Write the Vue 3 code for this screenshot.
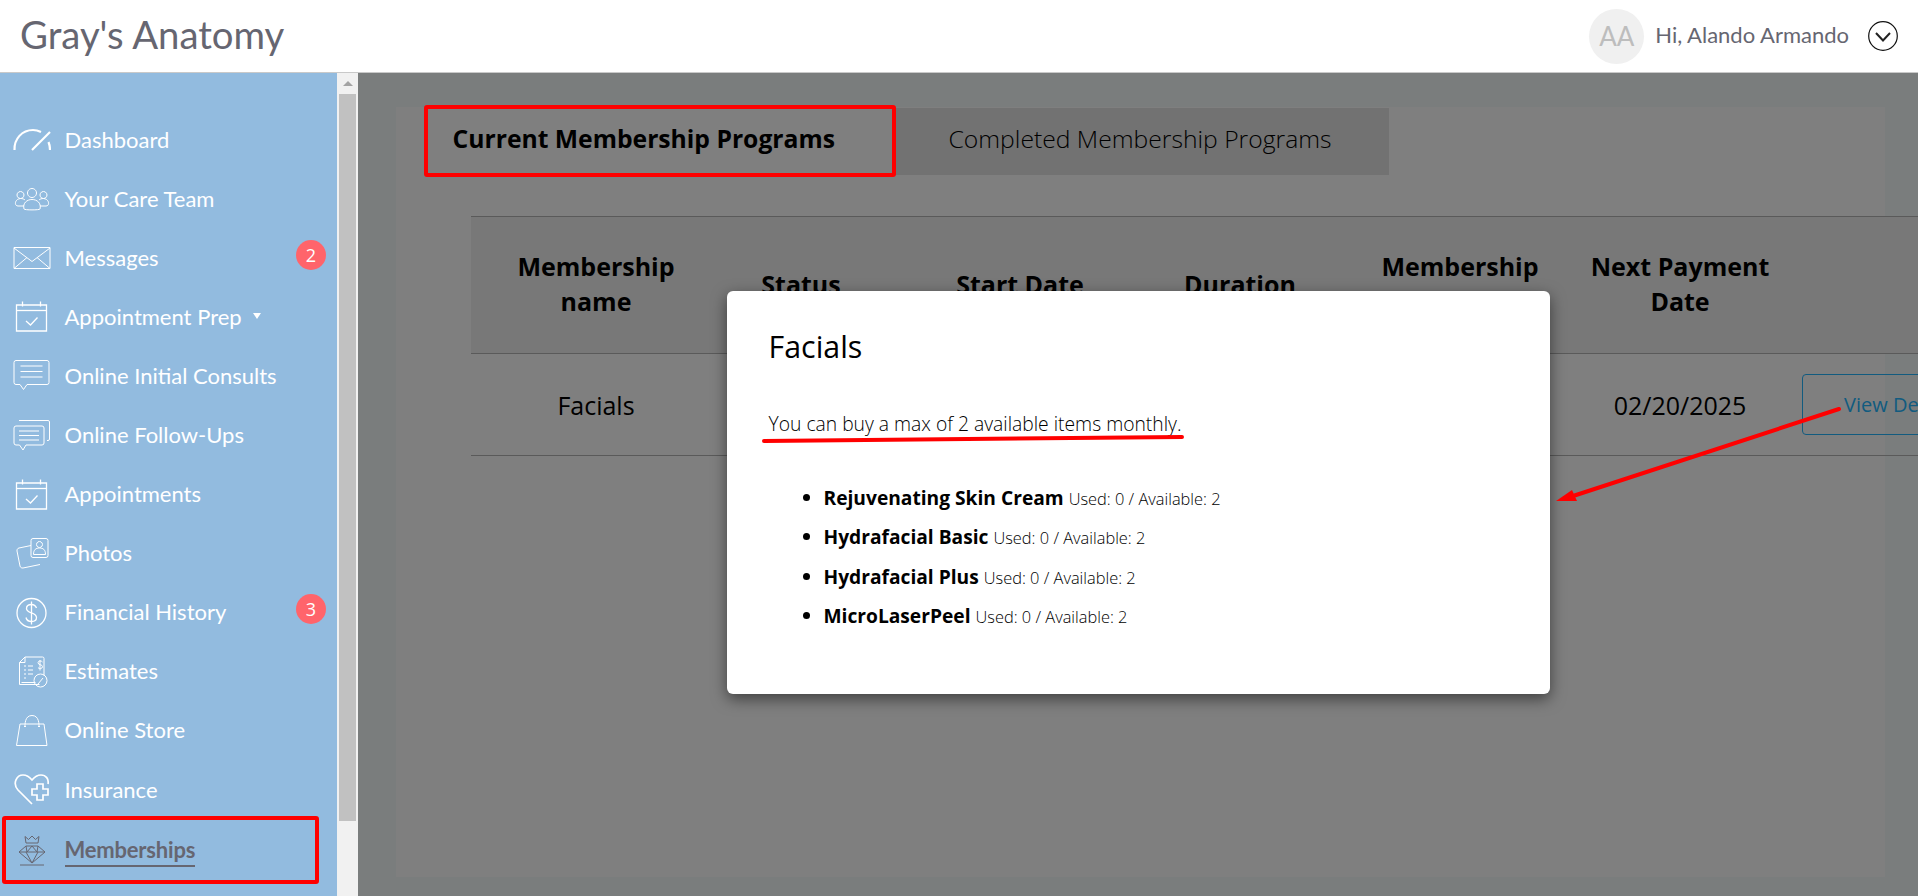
<script setup>
const nav = [
  { label: 'Dashboard', paths: ['M1.500 29C1 18 9 9 20 9c3 0 6 1 8 2', 'M19 29L37 11', 'M35.500 21c1 2.500 1.500 5 1.500 8'], sw: 2.200 },
  { label: 'Your Care Team', sw: 1, paths: ['M19 8.500a4.500 4.500 0 1 1-.01 0z', 'M7.500 11.500a3.500 3.500 0 1 1-.01 0z', 'M30.500 11.500a3.500 3.500 0 1 1-.01 0z', 'M11 29c-1.500-6 3-9.500 8-9.500s9.500 3.500 8 9.500c-.4 1.200-15.600 1.200-16 0z', 'M11 26H5c-4 0-3.500-7 2.500-7.500 2 0 3.500.5 4.500 1.500', 'M27 26h6c4 0 3.500-7-2.500-7.500-2 0-3.500.5-4.500 1.500'] },
  { label: 'Messages', badge: 2, sw: 1, paths: ['M1 8.500h36v21H1z', 'M1 9l18 13.500L37 9', 'M1 29.500l13-11', 'M37 29.500l-13-11'] },
  { label: 'Appointment Prep', caret: true, paths: ['M3.500 7h30v26h-30z', 'M3.500 12.500h30', 'M9.500 3.500v5', 'M27.500 3.500v5', 'M13 23l4.500 4 7-7.500'] },
  { label: 'Online Initial Consults', sw: 1, paths: ['M3 3.500h31a2 2 0 0 1 2 2v20a2 2 0 0 1-2 2H14l-3.500 5-3.500-5H3a2 2 0 0 1-2-2v-20a2 2 0 0 1 2-2z', 'M7.500 9h22', 'M7.500 14.500h22', 'M7.500 20h22'] },
  { label: 'Online Follow-Ups', sw: 1, paths: ['M3 9h26a2 2 0 0 1 2 2v15a2 2 0 0 1-2 2H13l-3 5-3.500-5H3a2 2 0 0 1-2-2V11a2 2 0 0 1 2-2z', 'M6 3.500h29a1.500 1.500 0 0 1 1.500 1.500v17a1.500 1.500 0 0 1-1.500 1.500h-1', 'M6 14h20', 'M6 18.500h20', 'M6 23h20'] },
  { label: 'Appointments', paths: ['M3.500 7h30v26h-30z', 'M3.500 12.500h30', 'M9.500 3.500v5', 'M27.500 3.500v5', 'M13 23l4.500 4 7-7.500'] },
  { label: 'Photos', sw: 1, paths: ['M20 3.500h13a2 2 0 0 1 2 2v15a2 2 0 0 1-2 2H20a2 2 0 0 1-2-2v-15a2 2 0 0 1 2-2z', 'M26.500 6.500a3 3 0 1 1-.01 0z', 'M20.500 19.500c0-5 2.500-6.500 6-6.500s6 1.500 6 6.500z', 'M18 10.500L6 13c-1.500.3-2.200 1.500-2 3l3 15c.3 1.500 1.500 2.200 3 2l17-3.500'] },
  { label: 'Financial History', badge: 3, paths: ['M33 19a14.500 14.500 0 1 1-29 0 14.500 14.500 0 1 1 29 0z', 'M23.500 14c-1-2.500-3-3.500-5-3.500-3 0-5 1.700-5 4 0 5.500 10 3 10 9 0 2.500-2.300 4-5 4s-5-1.500-5.500-4', 'M18.500 7.500v23'] },
  { label: 'Estimates', sw: 1, paths: ['M12 4h17.500a1.500 1.500 0 0 1 1.500 1.500v17', 'M12 4L6.500 9.500v22h20', 'M12 4v5.500H6.500', 'M11 13h2', 'M11 17h2', 'M11 21h2', 'M11 25h2', 'M15 13h5', 'M15 17h5', 'M15 21h5', 'M8.500 29.500h14', 'M29.500 9c-1-1.500-4.500-1.500-4.500.7 0 2.800 4.500 1.300 4.500 4 0 2.300-3.500 2.300-4.500 1', 'M27 7v10.500', 'M34 27.500a6.500 6.500 0 1 1-13 0 6.500 6.500 0 1 1 13 0z', 'M25 31l5-6'] },
  { label: 'Online Store', sw: 1, paths: ['M7 12h24l3 21.500H3.500z', 'M12 15c0-2-.5-11.500 7-11.500s7 9.500 7 11.500', 'M11 14.500h2', 'M25 14.500h2'] },
  { label: 'Insurance', sw: 1.700, paths: ['M19 33L5 19C-1 12 4 4 10 4c4 0 7 2.500 9 5 2-2.500 5-5 9-5 5 0 8 4 7 9', 'M24 18v-5h6v5h5v6h-5v5h-6v-5h-5v-6z'] },
  { label: 'Memberships', active: true, sw: 1, paths: ['M13 13L12 6.500l3.500 3L19 6l3.500 3.500L26 6.500 25 13z', 'M13 16h12l7 6-13 11L6 22z', 'M6 22h26', 'M13 22l6 11 6-11', 'M13 16l1 6 5-6 5 6 1-6', 'M7 35h24'] },
]
</script>

<template>
  <div class="page">
    <header class="top">
      <div class="brand">Gray's Anatomy</div>
      <div class="user">
        <div class="avatar">AA</div>
        <span class="hi">Hi, Alando Armando</span>
        <svg class="chev" width="30" height="30" viewBox="0 0 30 30">
          <circle cx="15" cy="15" r="14.300" fill="none" stroke="#111" stroke-width="1.200" />
          <path d="M8 12l7 7.500 7-7.500" fill="none" stroke="#222" stroke-width="2" />
        </svg>
      </div>
    </header>

    <div class="body">
      <aside class="side">
        <nav class="nav">
          <a v-for="item in nav" :key="item.label" class="nav-row" :class="{ active: item.active }">
            <svg class="ico" width="38" height="38" viewBox="0 0 38 38" fill="none" stroke="currentColor" :stroke-width="item.sw || 1.300">
              <path v-for="(d, i) in item.paths" :key="i" :d="d" />
            </svg>
            <span class="label">{{ item.label }}</span>
            <span v-if="item.caret" class="caret"></span>
            <span v-if="item.badge" class="badge">{{ item.badge }}</span>
          </a>
        </nav>
      </aside>
      <div class="scroll">
        <div class="arrow-up"></div>
        <div class="thumb"></div>
      </div>

      <main class="main">
        <section class="panel">
          <div class="tabs">
            <div class="tab on">Current Membership Programs</div>
            <div class="tab off">Completed Membership Programs</div>
          </div>
          <div class="table">
            <div class="tr head">
              <div class="th">Membership<br />name</div>
              <div class="th status">Status</div>
              <div class="th">Start Date</div>
              <div class="th">Duration</div>
              <div class="th">Membership<br />&nbsp;</div>
              <div class="th">Next Payment<br />Date</div>
            </div>
            <div class="tr row">
              <div class="td">Facials</div>
              <div class="td"></div>
              <div class="td"></div>
              <div class="td"></div>
              <div class="td"></div>
              <div class="td">02/20/2025</div>
              <button class="btn">View Details</button>
            </div>
          </div>
        </section>

        <div class="overlay">
          <div class="modal">
            <h2 class="m-title">Facials</h2>
            <p class="m-text">You can buy a max of 2 available items monthly.</p>
            <ul class="m-list">
              <li><b>Rejuvenating Skin Cream</b> <small>Used: 0 / Available: 2</small></li>
              <li><b>Hydrafacial Basic</b> <small>Used: 0 / Available: 2</small></li>
              <li><b>Hydrafacial Plus</b> <small>Used: 0 / Available: 2</small></li>
              <li><b>MicroLaserPeel</b> <small>Used: 0 / Available: 2</small></li>
            </ul>
          </div>
        </div>
      </main>
    </div>

    <svg class="marks" width="1918" height="896" viewBox="0 0 1918 896" fill="none" stroke="#f00">
      <rect x="426" y="107" width="468" height="68" stroke-width="4" rx="1" />
      <rect x="4" y="818" width="313" height="64" stroke-width="4" rx="1" />
      <path d="M764 441L1182 437" stroke-width="4" stroke-linecap="round" />
      <path d="M1839 409L1570 497" stroke-width="4" stroke-linecap="round" />
      <path d="M1556 501L1572 490L1577 501z" fill="#f00" stroke="none" />
    </svg>
  </div>
</template>

<style>
html, body { margin: 0; overflow: hidden; background: #fff; }
</style>

<style scoped>
.page { position: relative; width: 1918px; height: 896px; overflow: hidden; display: flex; flex-direction: column; font-family: "Open Sans", sans-serif; }
.top { height: 73px; box-sizing: border-box; border-bottom: 1px solid #c9c9c9; display: flex; align-items: center; justify-content: space-between; padding: 0 20px 0 20px; font-family: Lato, sans-serif; color: #666671; flex: none; }
.brand { font-size: 38.300px; margin-top: -5px; }
.user { display: flex; align-items: center; }
.avatar { width: 55px; height: 55px; border-radius: 50%; background: #f0f0f0; color: #bdbdbd; font-size: 26px; display: flex; align-items: center; justify-content: center; margin-right: 11px; }
.hi { font-size: 22px; margin-right: 19px; margin-top: -3px; }
.chev { display: block; }
.body { flex: 1; display: flex; min-height: 0; }
.side { width: 337px; background: #92bbdf; flex: none; padding-top: 37.500px; box-sizing: border-box; }
.nav-row { height: 59.100px; display: flex; align-items: center; padding-left: 13px; color: #fff; font-family: Lato, sans-serif; font-size: 22px; position: relative; }
.label { margin-top: -2px; }
.ico { flex: none; margin-right: 13.500px; }
.nav-row.active { color: #666671; font-weight: 700; }
.nav-row.active .label { border-bottom: 2px solid #666671; line-height: 27px; padding-bottom: 2px; margin-top: 4px; letter-spacing: -.2px; }
.caret { width: 0; height: 0; border-left: 4px solid transparent; border-right: 4px solid transparent; border-top: 6px solid #fff; margin-left: 11px; margin-top: -2px; }
.badge { position: absolute; left: 296px; top: 11px; width: 30px; height: 30px; border-radius: 50%; background: #ff646b; color: #fff; font-family: "Open Sans", sans-serif; font-size: 18px; display: flex; align-items: center; justify-content: center; }
.scroll { width: 21px; background: #f1f1f1; flex: none; display: flex; flex-direction: column; align-items: center; }
.arrow-up { width: 0; height: 0; border-left: 5px solid transparent; border-right: 5px solid transparent; border-bottom: 5px solid #a3a3a3; margin-top: 8px; margin-bottom: 8px; }
.thumb { width: 17px; height: 727px; background: #c1c1c1; }
.main { flex: 1; position: relative; overflow: hidden; background: #f4fbfb; padding: 34px 33px 19px 38px; min-width: 0; }
.panel { background: #fff; height: 100%; box-sizing: border-box; }
.tabs { display: flex; height: 68px; }
.tab { padding: 0 57px 6px 56.500px; display: flex; align-items: center; font-size: 24.700px; color: #000; white-space: nowrap; }
.tab.on { font-weight: 700; }
.tab.off { background: #e4e4e4; font-weight: 300; margin-top: 1px; padding-bottom: 7px; }
.table { margin: 41px 0 0 75px; width: 1500px; color: #000; }
.tr { display: grid; grid-template-columns: 250px 179px 240px 200px 240px 200px auto; align-items: center; text-align: center; }
.head { height: 138px; padding-bottom: 2px; background: #f0f0f0; border-top: 1px solid #b5b5b5; border-bottom: 1px solid #b5b5b5; box-sizing: border-box; }
.th { font-size: 25px; font-weight: 700; line-height: 35px; white-space: nowrap; }
.th.status { padding-right: 19px; }
.row { height: 102px; border-bottom: 1px solid #b5b5b5; box-sizing: border-box; }
.td { font-size: 25px; white-space: nowrap; }
.btn { margin-left: 22px; width: 204px; height: 61px; box-sizing: border-box; border: 1px solid #24b6ff; border-radius: 4px; background: transparent; color: #24b6ff; font-family: inherit; font-size: 20px; text-align: left; padding-left: 41px; }
.overlay { position: absolute; inset: 0; background: rgba(0, 0, 0, .5); display: flex; justify-content: center; align-items: flex-start; }
.modal { width: 823px; height: 403px; margin-top: 218px; background: #fff; border-radius: 6px; box-shadow: 0 5px 15px rgba(0, 0, 0, .5); box-sizing: border-box; padding: 37px 42px; color: #000; }
.m-title { margin: 0; font-size: 30.400px; font-weight: 400; line-height: 38px; }
.m-text { margin: 44px 0 0; font-size: 19.300px; font-weight: 300; line-height: 28px; }
.m-list { margin: 47px 0 0; padding-left: 55px; font-size: 19.200px; }
.m-list li { height: 39.300px; line-height: 26px; }
.m-list b { font-weight: 700; }
.m-list small { font-size: 16.400px; font-weight: 300; }
.marks { position: absolute; left: 0; top: 0; pointer-events: none; }
</style>
